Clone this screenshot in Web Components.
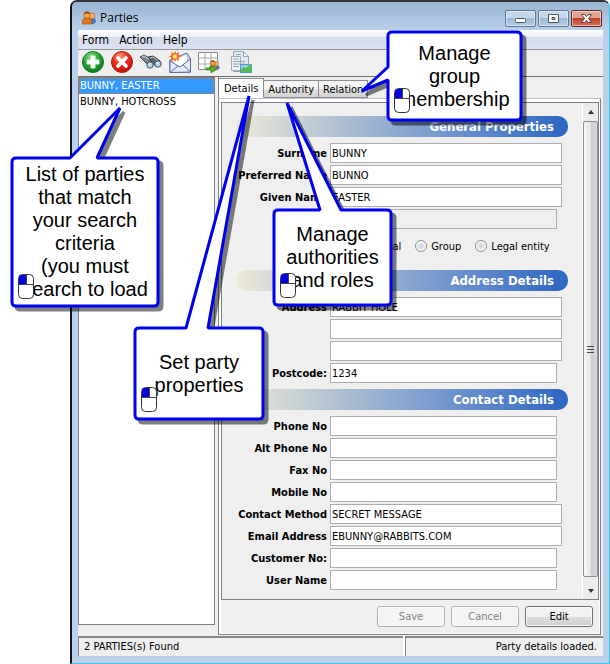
<!DOCTYPE html>
<html lang="en">
<head>
<meta charset="utf-8">
<title>Parties</title>
<style>
    body {
        margin: 0;
        background: #fff;
        font-family: "DejaVu Sans Condensed", "DejaVu Sans", sans-serif;
        font-size: 11px;
        color: #000;
    }
</style>
</head>
<body>
<parties-app></parties-app>

<script>
/* Shared by every component: builds the open shadow root from a string */
class BaseElement extends HTMLElement {
    connectedCallback() {
        if (this.shadowRoot) {
            return;
        }
        const template = document.createElement("template");
        template.innerHTML = `<style>*{box-sizing:border-box} :host([hidden]){display:none}</style>` + this.view();
        this.attachShadow({mode: "open"}).appendChild(template.content.cloneNode(true));
    }
}

const people = `
    <ellipse cx="10" cy="10" rx="4" ry="3" fill="#3f7fc4"/>
    <circle cx="10" cy="5" r="3" fill="#f0b070" stroke="#a8571c" stroke-width=".6"/>
    <path d="M0 13c0-5 2-6 5-6s5 1 5 6z" fill="#e4761b" stroke="#a4480c" stroke-width=".6"/>
    <circle cx="5" cy="4" r="3.3" fill="#f5a65b" stroke="#a4480c" stroke-width=".6"/>
    <path d="M2 3.500c0-4 6-4 6 0-2-1.500-4-1.500-6 0z" fill="#a8410b"/>`;

const icons = {
    people: `<svg viewBox="0 0 14 14" width="14" height="14">${people}</svg>`,
    add: `<svg viewBox="0 0 22 22" width="22" height="22">
        <defs><radialGradient id="g" cx=".4" cy=".25" r=".8"><stop offset="0" stop-color="#8fdc8a"/><stop offset=".5" stop-color="#25a332"/><stop offset="1" stop-color="#087818"/></radialGradient></defs>
        <circle cx="11" cy="11" r="10.500" fill="url(#g)" stroke="#0b7a1c"/>
        <path d="M9 5h4v4h4v4h-4v4H9v-4H5V9h4z" fill="#fff" stroke="#e2f6e0"/></svg>`,
    remove: `<svg viewBox="0 0 22 22" width="22" height="22">
        <defs><radialGradient id="r" cx=".4" cy=".25" r=".8"><stop offset="0" stop-color="#ff9a80"/><stop offset=".5" stop-color="#ec2b16"/><stop offset="1" stop-color="#b50f05"/></radialGradient></defs>
        <circle cx="11" cy="11" r="10.500" fill="url(#r)" stroke="#b8150a"/>
        <path d="M7 7l8 8M15 7l-8 8" stroke="#fff" stroke-width="3.600" stroke-linecap="round"/></svg>`,
    find: `<svg viewBox="0 0 22 22" width="22" height="22">
        <path d="M0 6l4-2 7 4 0 6-3 0z" fill="#7d878f" stroke="#444d54"/>
        <path d="M8 6l5-1 7 5 1 4-4 2-5-4z" fill="#5a646c" stroke="#343c43"/>
        <path d="M2 6l2-1 5 3M10 7l3-1 5 4" fill="none" stroke="#cdd5da"/>
        <circle cx="10" cy="14" r="3.200" fill="#b4d3ea" stroke="#4a535b"/>
        <circle cx="18" cy="13" r="3.200" fill="#b4d3ea" stroke="#4a535b"/>
        <path d="M8.500 14l2-2M16.500 13l2-2" stroke="#fff"/></svg>`,
    mail: `<svg viewBox="0 0 22 22" width="22" height="22">
        <path d="M1 9l17-7 3.500 6v13L1 21.500z" fill="#d2d8f2" stroke="#5b64a4"/>
        <path d="M4 8l14-5 1 10-8 4-7-4z" fill="#fff" stroke="#a3a9cf" stroke-width=".6"/>
        <path d="M1 10l10 6 10.500-8v13L1 21.500z" fill="#e8ebfb" stroke="#5b64a4"/>
        <path d="M1 21.500L9 15M21.500 21L14 14" stroke="#5b64a4"/>
        <path d="M6 0l1.300 2.500L10 1 9.500 4l3 1.500-3 1.200L10 10 7.200 8.500 6 11 4.800 8.500 2 10l.5-3.200L0 5.500 2.600 4 2 1l2.800 1.500z" fill="#f46a22"/>
        <circle cx="6" cy="5.500" r="2.200" fill="#ffe36c"/></svg>`,
    assign: `<svg viewBox="0 0 22 22" width="22" height="22">
        <path d="M.5 1.500h19v17H.5z" fill="#fff" stroke="#858a91"/>
        <path d="M7 1.500v17M13 1.500v17M.5 7h19M.5 13h19" stroke="#a2a7ad" fill="none"/>
        <g transform="translate(11 9) scale(.75)">${people}</g>
        <path d="M8 17h5v-3l5 4.500-5 3.500v-3H8z" fill="#4bb82f" stroke="#207c15" stroke-width=".7"/></svg>`,
    report: `<svg viewBox="0 0 22 22" width="22" height="22">
        <path d="M3.500 .5h10l5 5v15h-15z" fill="#e3ebf0" stroke="#93a6b2"/>
        <path d="M13.500 .5v5h5z" fill="#fff" stroke="#93a6b2"/>
        <path d="M1.500 5.500h9v14h-9z" fill="#edf2f5" stroke="#9aacb7"/>
        <path d="M3 8h6M3 10.500h12M3 13h12M3 15.500h6M6 3.500h5" stroke="#93a6b2"/>
        <path d="M10.500 13.500h11v8h-11z" fill="#9bcff0" stroke="#4b97c8"/>
        <path d="M11 21v-3l3-2 2 1 5-4v8z" fill="#54ba4a"/></svg>`
};

class AppIcon extends BaseElement {
    view() {
        return `<style>:host{display:inline-flex} svg{display:block}</style>${icons[this.getAttribute("name")]}`;
    }
}

/* ==================== */
/*  WINDOW AND ITS BARS */
/* ==================== */
class AppWindow extends BaseElement {
    view() {
        return `<style>
            :host {
                display: flex;
                flex-direction: column;
                min-height: 100vh;
                box-sizing: border-box;
                padding: 0 6px 7px;
                border: 1px solid #3ac4e6;
                border-top: 2px solid #2c313c;
                border-left: 2px solid #10151c;
                border-radius: 7px 7px 0 0;
                background: #bad0ea;
            }
            header {
                display: flex;
                align-items: center;
                gap: 4px;
                height: 28px;
                margin: 0 -6px;
                padding: 4px 7px 0 10px;
                border-radius: 5px 5px 0 0;
                background: linear-gradient(#98b4d2, #bad0e9);
            }
            h1 {
                flex: 1;
                margin: 0;
                font: 12px/16px "Open Sans", sans-serif;
            }
            .buttons { display: flex; gap: 2px; }
            button {
                display: flex;
                align-items: center;
                justify-content: center;
                width: 31px;
                height: 17px;
                padding: 0;
                border: 1px solid #5e7894;
                border-radius: 2px;
                box-shadow: inset 0 0 0 1px rgba(255, 255, 255, .5);
                background: linear-gradient(#c5d7ea 50%, #9fbad5 50%, #b4cce4);
            }
            .close {
                border-color: #6b2323;
                background: linear-gradient(#e0a493 50%, #bf4128 50%, #d0755c);
            }
            main {
                flex: 1;
                display: flex;
                flex-direction: column;
                background: #efefef;
            }
        </style>
        <header>
            <app-icon name="people"></app-icon>
            <h1>${this.getAttribute("heading")}</h1>
            <div class="buttons">
                <button aria-label="Minimize"><svg width="13" height="11"><rect x="1.500" y="5.500" width="10" height="4" rx="1" fill="#fff" stroke="#50565e"/></svg></button>
                <button aria-label="Maximize"><svg width="13" height="11"><path d="M1.500 1.500h10v8h-10zM5 4.500v2h3v-2z" fill="#fff" fill-rule="evenodd" stroke="#50565e"/></svg></button>
                <button class="close" aria-label="Close"><svg width="13" height="11"><path d="M1.500 1.500h3l2 2 2-2h3L8.500 5.500l3 4h-3l-2-2-2 2h-3l3-4z" fill="#fff" stroke="#5c4a50"/></svg></button>
            </div>
        </header>
        <main><slot></slot></main>`;
    }
}

class MenuBar extends BaseElement {
    view() {
        return `<style>
            :host {
                display: flex;
                gap: 10px;
                height: 20px;
                box-sizing: border-box;
                padding-left: 4px;
                border-bottom: 1px solid #95979f;
                background: linear-gradient(#fff, #eceff8 35%, #d5dbee 36%, #dde2f2);
            }
            button {
                padding: 0;
                border: 0;
                background: none;
                font: inherit;
                font-size: 12px;
            }
        </style>` + this.getAttribute("items").split(",").map(item => `<button>${item}</button>`).join("");
    }
}

class ToolBar extends BaseElement {
    view() {
        const tools = [["add", "Add"], ["remove", "Remove"], ["find", "Find"], ["mail", "New message"], ["assign", "Assign"], ["report", "Report"]];
        return `<style>
            :host {
                display: flex;
                align-items: center;
                gap: 7px;
                height: 27px;
                box-sizing: border-box;
                padding-left: 4px;
                border-bottom: 1px solid #6c7268;
            }
            button { width: 22px; padding: 0; border: 0; background: none; }
            /* the report tool stands in a group of its own */
            button:last-child { margin-left: 3px; }
        </style>` + tools.map(([icon, name]) => `<button aria-label="${name}"><app-icon name="${icon}"></app-icon></button>`).join("");
    }
}

class StatusBar extends BaseElement {
    view() {
        return `<style>
            :host { display: flex; gap: 2px; height: 20px; margin-top: 1px; background: #fff; }
            div {
                flex: 1;
                padding: 0 6px 0 5px;
                border-top: 2px solid #85858a;
                border-left: 1px solid #85858a;
                background: #efefef;
                line-height: 18px;
            }
            div:last-child { flex: 0 0 198px; text-align: right; }
        </style>
        <div><slot name="left"></slot></div>
        <div><slot name="right"></slot></div>`;
    }
}

/* ==================== */
/*     PARTIES LIST     */
/* ==================== */
class PartyList extends BaseElement {
    view() {
        const items = this.getAttribute("items").split("|");
        return `<style>
            :host {
                display: block;
                box-sizing: border-box;
                border: 1px solid #7d8089;
                background: #fff;
            }
            ul { margin: 0; padding: 0; list-style: none; }
            li { height: 16px; padding-left: 1px; line-height: 16px; white-space: nowrap; }
            li[aria-selected=true] {
                outline: 1px dotted #d87422;
                outline-offset: -1px;
                background: #3399ff;
                color: #fff;
            }
        </style>
        <ul role="listbox" aria-label="Parties">
            ${items.map((item, i) => `<li role="option" aria-selected="${i === 0}">${item}</li>`).join("")}
        </ul>`;
    }
}

/* ==================== */
/*   TABS AND THE FORM  */
/* ==================== */
class TabPane extends BaseElement {
    view() {
        const tabs = this.getAttribute("tabs").split(",");
        return `<style>
            :host { display: flex; flex-direction: column; min-width: 0; }
            .tabs {
                display: flex;
                align-items: flex-end;
                height: 21px;
                border-left: 1px solid #7d8089;
            }
            button {
                height: 18px;
                padding: 0 4px;
                border: 1px solid #8b8c95;
                border-left-width: 0;
                background: linear-gradient(#f3f3f3 50%, #e2e2e2 50%, #d2d2d2);
                font: inherit;
            }
            button[aria-selected=true] {
                height: 20px;
                padding: 0 5px;
                border-bottom-color: #fff;
                background: #fff;
            }
            .panel {
                flex: 1;
                display: flex;
                flex-direction: column;
                margin-right: 2px;
                padding: 3px 1px 1px 2px;
                border: 1px solid #7d8089;
                border-top-color: #c4c4c8;
                background: #fff;
            }
            .body { flex: 1; display: flex; flex-direction: column; background: #efefef; }
        </style>
        <div class="tabs" role="tablist">
            ${tabs.map((tab, i) => `<button role="tab" aria-selected="${i === 0}">${tab}</button>`).join("")}
        </div>
        <div class="panel" role="tabpanel"><div class="body"><slot></slot></div></div>`;
    }
}

class ScrollPane extends BaseElement {
    view() {
        return `<style>
            :host { display: flex; border: 1px solid #7d8089; }
            .content { flex: 1; padding: 13px 14px 2px 14px; }
            .bar {
                display: flex;
                flex-direction: column;
                width: 16px;
                border-left: 1px solid #fff;
                background: #ececec;
            }
            .bar > svg { flex: none; }
            .thumb {
                flex: 1;
                display: flex;
                align-items: center;
                justify-content: center;
                border: 1px solid #8d8d91;
                border-radius: 2px;
                background: linear-gradient(90deg, #f6f6f6, #e4e4e6 50%, #cacacd 51%, #dadadd);
            }
        </style>
        <div class="content"><slot></slot></div>
        <div class="bar">
            <svg width="15" height="18"><path d="M5 11l3-4 3 4z" fill="#333"/></svg>
            <div class="thumb"><svg width="7" height="9"><path d="M0 1.500h7M0 4.500h7M0 7.500h7" stroke="#45454a"/></svg></div>
            <svg width="15" height="22"><path d="M5 12l3 4 3-4z" fill="#333"/></svg>
        </div>`;
    }
}

class SectionHeading extends BaseElement {
    view() {
        return `<style>
            :host { display: block; margin: 0 0 6px; }
            h2 {
                margin: 0;
                padding-right: 14px;
                border-radius: 10px;
                background: linear-gradient(90deg, #ece9d8, #87a5cf 52%, #2d66c4);
                color: #fff;
                font-size: 13px;
                line-height: 21px;
                text-align: right;
            }
        </style>
        <h2><slot></slot></h2>`;
    }
}

class FormField extends BaseElement {
    view() {
        const label = this.getAttribute("label");
        const name = this.getAttribute("name") || "Other names";
        return `<style>
            :host {
                display: grid;
                grid-template-columns: 91px 1fr;
                gap: 3px;
                align-items: center;
                margin: 0 6px 2px 0;
            }
            :host([short]) { margin-right: 11px; }
            label { font-weight: bold; text-align: right; white-space: nowrap; }
            input {
                grid-column: 2;
                width: 100%;
                height: 20px;
                padding: 0 1px;
                border: 1px solid #abadb3;
                background: #fff;
                color: #000;
                font: inherit;
            }
            input:disabled { background: #efefef; }
        </style>
        ${label ? `<label for="field">${label}</label>` : ""}
        <input id="field" type="text" value="${this.getAttribute("value") || ""}"
            ${label ? "" : `aria-label="${name}"`} ${this.hasAttribute("disabled") ? "disabled" : ""}>`;
    }
}

class PartyType extends BaseElement {
    view() {
        return `<style>
            :host {
                display: flex;
                gap: 14px;
                align-items: center;
                height: 18px;
                margin: 8px 0 15px 101px;
            }
            label { display: flex; align-items: center; gap: 4px; white-space: nowrap; }
            input {
                appearance: none;
                width: 12px;
                height: 12px;
                margin: 0;
                border: 1px solid #8e8f8f;
                border-radius: 50%;
                background: radial-gradient(#cfd2d6, #e9eaec 50%, #fff 60%, #c5c7ca);
            }
            input:checked { background: radial-gradient(#1f5f8a 35%, #e9eaec 45%); }
        </style>
        <label><input type="radio" name="type" checked>Individual</label>
        <label><input type="radio" name="type">Group</label>
        <label><input type="radio" name="type">Legal entity</label>`;
    }
}

class ActionButton extends BaseElement {
    view() {
        return `<style>
            :host { display: block; }
            button {
                width: 68px;
                height: 21px;
                padding: 0;
                border: 1px solid #707070;
                border-radius: 3px;
                box-shadow: inset 0 0 0 1px #fafafa;
                background: linear-gradient(#f2f2f2 50%, #dedede 50%, #cfcfcf);
                color: #000;
                font: inherit;
            }
            button:disabled { border-color: #adb2b5; background: #f4f4f4; color: #838383; }
        </style>
        <button ${this.hasAttribute("disabled") ? "disabled" : ""}><slot></slot></button>`;
    }
}

/* ==================== */
/*       CALLOUTS       */
/* ==================== */
/* box: "left top width height"; tail: three points relative to the box */
class CallOut extends BaseElement {
    view() {
        const [x, y, w, h] = this.getAttribute("box").split(" ").map(Number);
        const [start, tip, end] = this.getAttribute("tail").split(" ");
        const edge = this.getAttribute("edge") || "top";
        const tail = `L${start} L${tip} L${end}`;
        return `<style>
            :host {
                position: absolute;
                left: ${x}px;
                top: ${y}px;
                width: ${w}px;
                height: ${h}px;
                display: flex;
                align-items: center;
                justify-content: center;
                font: 20px/23px "Liberation Sans", Arial, sans-serif;
                text-align: center;
                white-space: nowrap;
            }
            .shape {
                position: absolute;
                inset: 0;
                overflow: visible;
                filter: drop-shadow(4px 4px 0 rgba(0, 0, 0, .5));
            }
            p { position: relative; margin: 0; }
            .mouse { position: absolute; left: 7px; bottom: 8px; }
        </style>
        <svg class="shape" width="${w}" height="${h}">
            <path d="M5 1 ${edge === "top" ? tail : ""} H${w - 5} q4 0 4 4 V${h - 5} q0 4 -4 4 H5 q-4 0 -4 -4 ${edge === "left" ? tail : ""} V5 q0 -4 4 -4z"
                fill="#fff" stroke="#0000f0" stroke-width="3" stroke-linejoin="bevel"/>
        </svg>
        <p><slot></slot></p>
        <svg class="mouse" width="16" height="25">
            <rect x=".5" y=".5" width="15" height="24" rx="4" fill="#fff" stroke="#333"/>
            <path d="M1 10V4q0-3 3-3h4v9z" fill="#0000e0"/>
            <path d="M8.500 1v9M1 10.500h14" stroke="#444"/>
        </svg>`;
    }
}

class PartiesApp extends BaseElement {
    view() {
        return `<style>
            :host { display: block; position: relative; }
            app-window { margin-left: 70px; }
            .body {
                flex: 1;
                display: grid;
                grid-template-columns: 137px 1fr;
                gap: 3px;
            }
            party-list { margin-bottom: 10px; }
            scroll-pane { flex: 1; }
            section form-field:last-child { margin-bottom: 6px; }
            .actions {
                display: flex;
                justify-content: flex-end;
                gap: 6px;
                padding: 6px 6px 6px 0;
            }
        </style>
        <app-window heading="Parties">
            <menu-bar items="Form,Action,Help"></menu-bar>
            <tool-bar></tool-bar>
            <div class="body">
                <party-list items="BUNNY, EASTER|BUNNY, HOTCROSS"></party-list>
                <tab-pane tabs="Details,Authority,Relation">
                    <scroll-pane>
                        <section>
                            <section-heading>General Properties</section-heading>
                            <form-field label="Surname" value="BUNNY"></form-field>
                            <form-field label="Preferred Name" value="BUNNO"></form-field>
                            <form-field label="Given Name" value="EASTER"></form-field>
                            <form-field short disabled></form-field>
                            <party-type></party-type>
                        </section>
                        <section>
                            <section-heading>Address Details</section-heading>
                            <form-field label="Address" value="RABBIT HOLE"></form-field>
                            <form-field name="Address line 2"></form-field>
                            <form-field name="Address line 3"></form-field>
                            <form-field label="Postcode:" value="1234" short></form-field>
                        </section>
                        <section>
                            <section-heading>Contact Details</section-heading>
                            <form-field label="Phone No" short></form-field>
                            <form-field label="Alt Phone No" short></form-field>
                            <form-field label="Fax No" short></form-field>
                            <form-field label="Mobile No" short></form-field>
                            <form-field label="Contact Method" value="SECRET MESSAGE"></form-field>
                            <form-field label="Email Address" value="EBUNNY@RABBITS.COM"></form-field>
                            <form-field label="Customer No:" short></form-field>
                            <form-field label="User Name" short></form-field>
                        </section>
                    </scroll-pane>
                    <div class="actions">
                        <action-button disabled>Save</action-button>
                        <action-button disabled>Cancel</action-button>
                        <action-button>Edit</action-button>
                    </div>
                </tab-pane>
            </div>
            <status-bar>
                <span slot="left">2 PARTIES(s) Found</span>
                <span slot="right">Party details loaded.</span>
            </status-bar>
        </app-window>
        <call-out box="11 157 148 150" tail="59,1 109,-49 86,1">List of parties<br>that match<br>your search<br>criteria<br>(you must<br>search to load</call-out>
        <call-out box="134 327 130 93" tail="52,1 115,-231 74,1">Set party<br>properties</call-out>
        <call-out box="273 209 119 97" tail="47,1 14,-106 68,1">Manage<br>authorities<br>and roles</call-out>
        <call-out box="387 31 135 90" edge="left" tail="1,49 -25,60 1,36">Manage<br>group<br>membership</call-out>`;
    }
}

customElements.define("app-icon", AppIcon);
customElements.define("app-window", AppWindow);
customElements.define("menu-bar", MenuBar);
customElements.define("tool-bar", ToolBar);
customElements.define("status-bar", StatusBar);
customElements.define("party-list", PartyList);
customElements.define("tab-pane", TabPane);
customElements.define("scroll-pane", ScrollPane);
customElements.define("section-heading", SectionHeading);
customElements.define("form-field", FormField);
customElements.define("party-type", PartyType);
customElements.define("action-button", ActionButton);
customElements.define("call-out", CallOut);
customElements.define("parties-app", PartiesApp);
</script>
</body>
</html>
